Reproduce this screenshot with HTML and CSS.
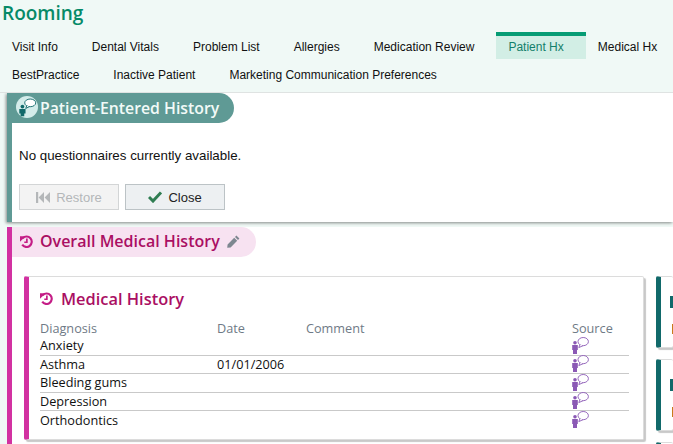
FILE: index.html
```html
<!DOCTYPE html>
<html lang="en">
<head>
  <meta charset="UTF-8">
  <title>Rooming</title>
  <link rel="stylesheet" href="styles.css">
</head>
<body>
  <svg class="defs" width="0" height="0">
    <symbol id="history" viewBox="0 0 14 14">
      <path d="M3 3.4A5.6 5.6 0 1 1 2.4 10.4" fill="none" stroke="currentColor" stroke-width="2.3"/>
      <path d="M0 1.4L6 1.4L0 7.4Z" fill="currentColor"/>
      <path d="M7.4 3.8V7.8H4.6" fill="none" stroke="currentColor" stroke-width="1.8"/>
    </symbol>
    <symbol id="source" viewBox="0 0 17 17">
      <circle cx="3" cy="5.8" r="1.8" fill="currentColor"/>
      <path d="M0.2 8H5.8V13H5V17H1V13H0.2Z" fill="currentColor"/>
      <ellipse cx="11.2" cy="4.6" rx="5.2" ry="4.1" fill="#fff" stroke="currentColor" stroke-width="0.9"/>
      <path d="M8 7.6L6.8 10.6L11 8.7" fill="#fff" stroke="currentColor" stroke-width="0.9"/>
    </symbol>
  </svg>

  <header class="top">
    <h1 class="page-title">Rooming</h1>
    <div class="tab-row">
      <a class="tab">Visit Info</a>
      <a class="tab">Dental Vitals</a>
      <a class="tab">Problem List</a>
      <a class="tab">Allergies</a>
      <a class="tab">Medication Review</a>
      <a class="tab active">Patient Hx</a>
      <a class="tab">Medical Hx</a>
    </div>
    <div class="tab-row">
      <a class="tab">BestPractice</a>
      <a class="tab">Inactive Patient</a>
      <a class="tab">Marketing Communication Preferences</a>
    </div>
  </header>

  <main class="content">
    <section class="entered">
      <h2 class="entered-title">
        <span class="entered-badge">
          <svg width="22" height="22" viewBox="0 0 24 24">
            <circle cx="12" cy="12" r="12" fill="#d3ecea"/>
            <circle cx="7" cy="11.5" r="2" fill="#11696a"/>
            <path d="M3.6 14.2H10.4V19H9V22H5V19H3.6Z" fill="#11696a"/>
            <ellipse cx="15.5" cy="7.5" rx="6" ry="4.2" fill="#fff" stroke="#11696a"/>
            <path d="M11.8 10.6L10.6 13.6L14.6 11.6" fill="#fff" stroke="#11696a"/>
          </svg>
        </span>
        Patient-Entered History
      </h2>
      <p class="no-items">No questionnaires currently available.</p>
      <div class="buttons">
        <button class="btn" disabled>
          <svg width="14" height="11" viewBox="0 0 14 11"><path d="M0 0H2.2V11H0ZM8 0V11L2.6 5.5ZM14 0V11L8.6 5.5Z" fill="currentColor"/></svg>
          Restore
        </button>
        <button class="btn">
          <svg class="check" width="14" height="12" viewBox="0 0 14 12"><path d="M1 6L5 10L13 1.4" fill="none" stroke="#2f7d52" stroke-width="3"/></svg>
          Close
        </button>
      </div>
    </section>

    <section class="overall">
      <h2 class="overall-title">
        <svg class="icon-history" width="13" height="13"><use href="#history"/></svg>
        Overall Medical History
        <svg class="pencil" width="13" height="13" viewBox="0 0 13 13"><path d="M9.4 0.6L12.4 3.6L11 5L8 2ZM7.2 2.8L10.2 5.8L3.6 12.4L0.2 12.8L0.6 9.4Z" fill="#7d8790"/></svg>
      </h2>

      <div class="cards">
        <article class="card history-card">
          <h3 class="card-title">
            <svg class="icon-history" width="13" height="13"><use href="#history"/></svg>
            Medical History
          </h3>
          <div class="hx-row hx-head">
            <span>Diagnosis</span><span>Date</span><span>Comment</span><span>Source</span>
          </div>
          <div class="hx-row"><span>Anxiety</span><span></span><span></span><svg class="src" width="17" height="17"><use href="#source"/></svg></div>
          <div class="hx-row"><span>Asthma</span><span>01/01/2006</span><span></span><svg class="src" width="17" height="17"><use href="#source"/></svg></div>
          <div class="hx-row"><span>Bleeding gums</span><span></span><span></span><svg class="src" width="17" height="17"><use href="#source"/></svg></div>
          <div class="hx-row"><span>Depression</span><span></span><span></span><svg class="src" width="17" height="17"><use href="#source"/></svg></div>
          <div class="hx-row"><span>Orthodontics</span><span></span><span></span><svg class="src" width="17" height="17"><use href="#source"/></svg></div>
        </article>

        <div class="side">
          <div class="card side-card"><span class="side-icon"></span><span class="side-mark"></span></div>
          <div class="card side-card"><span class="side-icon"></span><span class="side-mark"></span></div>
          <div class="card side-card"></div>
        </div>
      </div>
    </section>
  </main>
</body>
</html>
```

FILE: styles.css
```css
html, body {
  height: 100%;
}
body {
  margin: 0;
  overflow: hidden;
  font-family: "Liberation Sans", Arial, sans-serif;
  background-color: #f0f9f6;
  color: #111;
}
.defs {
  position: absolute;
}
.top {
  height: 92px;
  box-sizing: border-box;
}
.page-title {
  margin: 0;
  padding: 0 0 0 2px;
  height: 32px;
  font-family: "Open Sans", sans-serif;
  font-size: 19px;
  line-height: 27px;
  font-weight: 600;
  color: #068a68;
}
.tab-row {
  display: flex;
  height: 28px;
  white-space: nowrap;
}
.tab {
  flex: none;
  height: 27px;
  box-sizing: border-box;
  padding: 4px 22px 0 12px;
  border-top: 4px solid transparent;
  font-size: 12px;
  line-height: 15px;
  color: #111;
}
.tab:last-child {
  padding-right: 0;
}
.tab.active {
  background-color: #d2eee5;
  border-top-color: #069c74;
  color: #13806a;
}
.content {
  height: 351px;
  overflow: hidden;
  border-top: 1px solid #dfe3e2;
  padding-left: 7px;
}
.entered {
  height: 129px;
  box-sizing: border-box;
  background-color: #fff;
  border-left: 5px solid #5f9a95;
  box-shadow: -1px 1px 3px rgba(0, 0, 0, 0.45);
  margin-bottom: 5px;
}
.entered-title {
  display: inline-flex;
  align-items: center;
  gap: 2px;
  height: 30px;
  margin: 0;
  padding: 0 15px 0 4px;
  background-color: #5f9a95;
  border-radius: 0 15px 15px 0;
  font-family: "Open Sans", sans-serif;
  font-size: 15.8px;
  font-weight: 600;
  color: #f2faf8;
  white-space: nowrap;
}
.entered-badge {
  display: flex;
  margin-top: -2px;
}
.no-items {
  margin: 25px 0 0 7px;
  font-size: 13.33px;
  line-height: 15px;
  color: #111;
}
.buttons {
  display: flex;
  gap: 6px;
  margin: 21px 0 0 7px;
}
.btn {
  display: flex;
  align-items: center;
  justify-content: center;
  gap: 6px;
  width: 100px;
  height: 26px;
  padding: 0;
  background-color: #edf0f2;
  border: 1px solid #bcc3c6;
  font-family: "Liberation Sans", Arial, sans-serif;
  font-size: 13px;
  color: #222;
}
.btn[disabled] {
  background-color: #f3f3f3;
  border-color: #d3d5d6;
  color: #b4b7b9;
}
.overall {
  height: 217px;
  background-color: #fff;
  border-left: 5px solid #d231a1;
}
.overall-title {
  display: inline-flex;
  align-items: center;
  gap: 7px;
  height: 30px;
  margin: 0;
  padding: 0 16px 2px 8px;
  box-sizing: border-box;
  background-color: #f7e2f1;
  border-radius: 0 15px 15px 0;
  font-family: "Open Sans", sans-serif;
  font-size: 16px;
  font-weight: 600;
  color: #aa0f63;
  white-space: nowrap;
}
.pencil {
  flex: none;
}
.icon-history {
  flex: none;
  color: #c41d86;
}
.cards {
  display: flex;
  align-items: flex-start;
  gap: 12px;
  margin: 19px 0 0 12px;
}
.card {
  background-color: #fff;
  border: 1px solid #dcdcdc;
  border-left: 5px solid #d231a1;
  box-shadow: 2px 2px 1px #c8c8c8;
  border-radius: 2px;
  box-sizing: border-box;
}
.history-card {
  flex: none;
  width: 620px;
  height: 164px;
  padding: 9px 14px 0 11px;
}
.card-title {
  display: flex;
  align-items: center;
  gap: 8px;
  margin: 0 0 10px;
  height: 24px;
  font-family: "Open Sans", sans-serif;
  font-size: 16.4px;
  font-weight: 600;
  color: #aa0f63;
}
.hx-row {
  display: grid;
  grid-template-columns: 177px 89px 266px 1fr;
  align-items: center;
  box-sizing: border-box;
  height: 18.5px;
  border-bottom: 1px solid #c9c9c9;
  font-family: "Open Sans", sans-serif;
  font-size: 12.7px;
  line-height: 17px;
  color: #111;
}
.hx-row:last-child {
  border-bottom: none;
}
.hx-head {
  height: 17px;
  border-bottom: none;
  color: #6f7a86;
}
.src {
  margin-top: -1px;
  color: #8b59b5;
}
.side {
  display: flex;
  flex-direction: column;
  gap: 11px;
  flex: none;
}
.side-card {
  position: relative;
  width: 17px;
  height: 72px;
  border-left-color: #11696a;
  border-right: none;
}
.side-icon {
  position: absolute;
  left: 9px;
  top: 19px;
  width: 3px;
  height: 12px;
  background-color: #11696a;
}
.side-mark {
  position: absolute;
  left: 11px;
  top: 47px;
  width: 1px;
  height: 10px;
  background-color: #c87a1a;
}
```
